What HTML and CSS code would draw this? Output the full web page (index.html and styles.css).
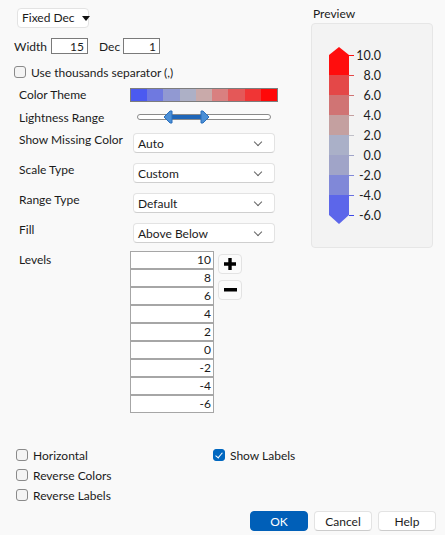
FILE: index.html
```html
<!DOCTYPE html>
<html lang="en">
<head>
    <meta charset="UTF-8">
    <title>Legend Settings</title>
    <link rel="stylesheet" href="styles.css">
</head>
<body>
    <div class="dialog">
        <div class="main">
            <div class="left">
                <div class="fmt-select">Fixed Dec <span class="caret"></span></div>

                <div class="width-row">
                    <span class="w-label">Width</span>
                    <input class="num" type="text" value="15">
                    <span class="dec-label">Dec</span>
                    <input class="num" type="text" value="1">
                </div>

                <label class="check sep-row"><span class="box"></span>Use thousands separator (,)</label>

                <div class="prop theme-row">
                    <span class="prop-label">Color Theme</span>
                    <div class="theme-bar">
                        <span style="background:#4b5af0"></span>
                        <span style="background:#6f79e0"></span>
                        <span style="background:#9199d2"></span>
                        <span style="background:#adb0c6"></span>
                        <span style="background:#c9aaaa"></span>
                        <span style="background:#d98080"></span>
                        <span style="background:#e45858"></span>
                        <span style="background:#f03535"></span>
                        <span style="background:#ff0808"></span>
                    </div>
                </div>

                <div class="prop light-row">
                    <span class="prop-label">Lightness Range</span>
                    <svg class="range" width="136" height="14" viewBox="0 0 136 14">
                        <rect x="0.5" y="4.5" width="133" height="5" rx="2.5" fill="#fff" stroke="#8a8a8a"/>
                        <rect x="30" y="5" width="40" height="4" fill="#1f66b8"/>
                        <path d="M27 7 L33 1 L35 1 L35 13 L33 13 Z" fill="#4b8fd6" stroke="#2a6fbc"/>
                        <path d="M72 7 L66 1 L64 1 L64 13 L66 13 Z" fill="#4b8fd6" stroke="#2a6fbc"/>
                    </svg>
                </div>

                <div class="prop">
                    <span class="prop-label">Show Missing Color</span>
                    <div class="combo">Auto<span class="chev"></span></div>
                </div>
                <div class="prop">
                    <span class="prop-label">Scale Type</span>
                    <div class="combo">Custom<span class="chev"></span></div>
                </div>
                <div class="prop">
                    <span class="prop-label">Range Type</span>
                    <div class="combo">Default<span class="chev"></span></div>
                </div>
                <div class="prop">
                    <span class="prop-label">Fill</span>
                    <div class="combo">Above Below<span class="chev"></span></div>
                </div>

                <div class="prop levels-row">
                    <span class="prop-label">Levels</span>
                    <div class="levels">
                        <div class="cell">10</div>
                        <div class="cell">8</div>
                        <div class="cell">6</div>
                        <div class="cell">4</div>
                        <div class="cell">2</div>
                        <div class="cell">0</div>
                        <div class="cell">-2</div>
                        <div class="cell">-4</div>
                        <div class="cell">-6</div>
                    </div>
                    <div class="level-btns">
                        <button class="icon-btn">
                            <svg width="12" height="12" viewBox="0 0 12 12"><path d="M4.3 0h3.4v4.3H12v3.4H7.7V12H4.3V7.7H0V4.3h4.3z" fill="#000"/></svg>
                        </button>
                        <button class="icon-btn">
                            <svg width="13" height="4" viewBox="0 0 13 4"><rect width="13" height="3.5" fill="#000"/></svg>
                        </button>
                    </div>
                </div>
            </div>

            <div class="right">
                <div class="preview-title">Preview</div>
                <div class="preview">
                    <svg width="120" height="223" viewBox="0 0 120 223">
                        <!-- arrow caps -->
                        <polygon points="17,31 27,23 37,31" fill="#ff0d0d"/>
                        <polygon points="17,191 27,200 37,191" fill="#5c66ea"/>
                        <!-- bands, top to bottom -->
                        <rect x="17" y="31" width="20" height="20" fill="#ff0d0d"/>
                        <rect x="17" y="51" width="20" height="20" fill="#e44848"/>
                        <rect x="17" y="71" width="20" height="20" fill="#d07474"/>
                        <rect x="17" y="91" width="20" height="20" fill="#c4a0a0"/>
                        <rect x="17" y="111" width="20" height="20" fill="#aab0c8"/>
                        <rect x="17" y="131" width="20" height="20" fill="#a0a4c8"/>
                        <rect x="17" y="151" width="20" height="20" fill="#8088d8"/>
                        <rect x="17" y="171" width="20" height="20" fill="#5c66ea"/>
                        <!-- ticks -->
                        <g stroke-width="1">
                            <line x1="37" y1="31.5" x2="42" y2="31.5" stroke="#ff0d0d"/>
                            <line x1="37" y1="51.5" x2="42" y2="51.5" stroke="#e44848"/>
                            <line x1="37" y1="71.5" x2="42" y2="71.5" stroke="#d07474"/>
                            <line x1="37" y1="91.5" x2="42" y2="91.5" stroke="#c4a0a0"/>
                            <line x1="37" y1="111.5" x2="42" y2="111.5" stroke="#c0c0c8"/>
                            <line x1="37" y1="131.5" x2="42" y2="131.5" stroke="#a0a4c8"/>
                            <line x1="37" y1="151.5" x2="42" y2="151.5" stroke="#8088d8"/>
                            <line x1="37" y1="171.5" x2="42" y2="171.5" stroke="#6870e0"/>
                            <line x1="37" y1="191.5" x2="42" y2="191.5" stroke="#3a46e8"/>
                        </g>
                        <g class="tick-labels" text-anchor="end">
                            <text x="69" y="36">10.0</text>
                            <text x="69" y="56">8.0</text>
                            <text x="69" y="76">6.0</text>
                            <text x="69" y="96">4.0</text>
                            <text x="69" y="116">2.0</text>
                            <text x="69" y="136">0.0</text>
                            <text x="69" y="156">-2.0</text>
                            <text x="69" y="176">-4.0</text>
                            <text x="69" y="196">-6.0</text>
                        </g>
                    </svg>
                </div>
            </div>
        </div>

        <div class="options">
            <div class="opt-col">
                <label class="check opt"><span class="box"></span>Horizontal</label>
                <label class="check opt"><span class="box"></span>Reverse Colors</label>
                <label class="check opt"><span class="box"></span>Reverse Labels</label>
            </div>
            <div class="opt-col">
                <label class="check opt"><span class="box checked"></span>Show Labels</label>
            </div>
        </div>

        <div class="actions">
            <button class="btn primary">OK</button>
            <button class="btn">Cancel</button>
            <button class="btn">Help</button>
        </div>
    </div>
</body>
</html>
```

FILE: styles.css
```css
* {
    box-sizing: border-box;
}
body {
    margin: 0;
    background: #f9f9f9;
    font-family: Lato, "Noto Sans", sans-serif;
    font-size: 12px;
    color: #1b1b1b;
}
.dialog {
    width: 445px;
    height: 535px;
    padding-top: 8px;
    display: flex;
    flex-direction: column;
}
.main {
    display: flex;
}
.left {
    width: 311px;
    padding-left: 14px;
}

/* number format */
.fmt-select {
    margin-left: 3px;
    width: 72px;
    height: 20px;
    background: #fff;
    border: 1px solid #e3e3e3;
    border-radius: 4px;
    padding-left: 4px;
    display: flex;
    align-items: center;
    white-space: nowrap;
    line-height: 14px;
}
.caret {
    margin-left: 7px;
    border-left: 4px solid transparent;
    border-right: 4px solid transparent;
    border-top: 5px solid #111;
}
.width-row {
    margin-top: 10px;
    height: 16px;
    display: flex;
    align-items: center;
}
.w-label {
    width: 37px;
}
.num {
    width: 37px;
    height: 16px;
    border: 1px solid #7a7a7a;
    background: #fff;
    font: inherit;
    color: inherit;
    text-align: right;
    padding: 0 3px;
}
.dec-label {
    width: 35px;
    padding-left: 11px;
}

/* checkboxes */
.check {
    display: flex;
    align-items: center;
    white-space: nowrap;
}
.box {
    width: 12px;
    height: 12px;
    border: 1px solid #8a8a8a;
    border-radius: 3px;
    background: #f4f4f4;
    margin-right: 5px;
    flex: none;
}
.box.checked {
    background: #0067c0;
    border-color: #0067c0;
    position: relative;
}
.box.checked::after {
    content: "";
    position: absolute;
    left: 3px;
    top: 1px;
    width: 3px;
    height: 6px;
    border-right: 1.5px solid #fff;
    border-bottom: 1.5px solid #fff;
    transform: rotate(40deg);
}
.sep-row {
    margin-top: 12px;
    height: 12px;
}

/* property rows */
.prop {
    display: flex;
    margin-top: 10px;
    padding-left: 5px;
}
.prop-label {
    width: 111px;
    flex: none;
    line-height: 14px;
}
.theme-row {
    height: 14px;
    align-items: center;
}
.theme-bar {
    width: 148px;
    height: 14px;
    border: 1px solid #7d7d7d;
    display: flex;
}
.theme-bar span {
    flex: 1;
}
.light-row {
    margin-top: 6px;
    height: 20px;
    align-items: center;
}
.range {
    margin-left: 7px;
    margin-top: -3px;
}
.light-row + .prop {
    margin-top: 5px;
}
.combo {
    margin-left: 3px;
    width: 142px;
    height: 20px;
    background: #fff;
    border: 1px solid #e3e3e3;
    border-bottom-color: #cfcfcf;
    border-radius: 4px;
    padding: 1px 5px 0 4px;
    display: flex;
    align-items: center;
    justify-content: space-between;
    line-height: 14px;
}
.chev {
    width: 6px;
    height: 6px;
    border-right: 1px solid #666;
    border-bottom: 1px solid #666;
    transform: rotate(45deg);
    margin: -3px 8px 0 0;
}

/* levels table */
.levels-row {
    margin-top: 8px;
}
.levels-row .prop-label {
    padding-top: 2px;
}
.levels {
    width: 84px;
}
.cell {
    height: 18px;
    border: 1px solid #a6a6a6;
    background: #fff;
    text-align: right;
    padding-right: 2px;
    line-height: 16px;
}
.level-btns {
    margin-left: 4px;
    margin-top: 3px;
    display: flex;
    flex-direction: column;
    gap: 6px;
}
.icon-btn {
    width: 24px;
    height: 20px;
    background: #fbfbfb;
    border: 1px solid #e3e3e3;
    border-radius: 4px;
    padding: 0;
    display: flex;
    align-items: center;
    justify-content: center;
}

/* preview */
.right {
    width: 122px;
}
.preview-title {
    margin-top: -1px;
    padding-left: 2px;
    height: 16px;
    line-height: 14px;
}
.preview {
    width: 122px;
    height: 225px;
    background: #f3f3f3;
    border: 1px solid #e6e6e6;
    border-radius: 4px;
}
.preview svg {
    display: block;
}
.tick-labels text {
    font-family: Lato, "Noto Sans", sans-serif;
    font-size: 12.5px;
    fill: #1b1b1b;
}

/* bottom options */
.options {
    margin-top: auto;
    display: flex;
    padding-left: 16px;
}
.opt-col {
    width: 197px;
}
.opt {
    height: 20px;
}
.actions {
    display: flex;
    justify-content: flex-end;
    gap: 6px;
    padding: 6px 9px 4px 0;
}
.btn {
    width: 58px;
    height: 20px;
    background: #fff;
    border: 1px solid #e3e3e3;
    border-bottom-color: #cccccc;
    border-radius: 4px;
    font: inherit;
    color: inherit;
    padding: 0;
}
.btn.primary {
    background: #005fb8;
    border-color: #005fb8;
    color: #fff;
}
```
